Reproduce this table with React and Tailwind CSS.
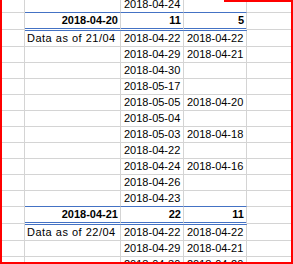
import React from 'react';

const rows = [
    { c: '2018-04-24', first: true, blue: true },
    { total: true, b: '2018-04-20', c: '11', d: '5' },
    { b: 'Data as of 21/04', c: '2018-04-22', d: '2018-04-22' },
    { c: '2018-04-29', d: '2018-04-21' },
    { c: '2018-04-30' },
    { c: '2018-05-17' },
    { c: '2018-05-05', d: '2018-04-20' },
    { c: '2018-05-04' },
    { c: '2018-05-03', d: '2018-04-18' },
    { c: '2018-04-22' },
    { c: '2018-04-24', d: '2018-04-16' },
    { c: '2018-04-26' },
    { c: '2018-04-23', blue: true },
    { total: true, b: '2018-04-21', c: '22', d: '11' },
    { b: 'Data as of 22/04', c: '2018-04-22', d: '2018-04-22' },
    { c: '2018-04-29', d: '2018-04-21' },
    { c: '2018-04-30', d: '2018-04-20' },
];

const Row = ({ row }) => {
    if (row.total) {
        return (
            <div className="flex h-[18px] font-bold">
                <div className="w-[23px] border-r border-[#d4d4d4]">
                    <div className="h-[17px] border-b border-[#d4d4d4]" />
                </div>
                <div className="w-[96px] h-[18px] border-r border-[#d4d4d4] border-b-[3px] border-b-[#4472c4] border-double flex items-end justify-end pr-[2px] leading-[15px]">
                    {row.b}
                </div>
                <div className="w-[63px] h-[18px] border-r border-[#d4d4d4] border-b-[3px] border-b-[#4472c4] border-double flex items-end justify-end pr-[2px] leading-[15px]">
                    {row.c}
                </div>
                <div className="w-[63px] h-[18px] border-r border-[#d4d4d4] border-b-[3px] border-b-[#4472c4] border-double flex items-end justify-end pr-[2px] leading-[15px]">
                    {row.d}
                </div>
                <div className="w-[44px]">
                    <div className="h-[17px] border-b border-[#d4d4d4]" />
                </div>
            </div>
        );
    }

    const line = row.blue ? 'border-b-[#4472c4]' : 'border-b-[#d4d4d4]';
    return (
        <div className={`flex h-[16px] leading-[15px] ${row.first ? '-mt-[3px]' : ''}`}>
            <div className="w-[23px] border-r border-b border-[#d4d4d4]" />
            <div className={`w-[96px] border-r border-b border-[#d4d4d4] ${line} pl-[2px] tracking-[0.5px] whitespace-nowrap`}>
                {row.b}
            </div>
            <div className={`w-[63px] border-r border-b border-[#d4d4d4] ${line} pl-[3px] whitespace-nowrap`}>
                {row.c}
            </div>
            <div className={`w-[63px] border-r border-b border-[#d4d4d4] ${line} pl-[3px] whitespace-nowrap`}>
                {row.d}
            </div>
            <div className="w-[44px] border-b border-[#d4d4d4]" />
        </div>
    );
};

export default function App() {
    return (
        <div className="relative w-[293px] h-[264px] overflow-hidden bg-white text-black text-[11px] font-['Liberation_Sans',Arial,sans-serif]">
            <div className="pl-[2px]">
                {rows.map((row, i) => (
                    <Row key={i} row={row} />
                ))}
            </div>
            <div className="absolute inset-0 border-l-2 border-r-2 border-b-2 border-[#ff0000] pointer-events-none" />
            <div className="absolute top-0 left-[224px] right-0 h-[2px] bg-[#ff0000]" />
        </div>
    );
}
